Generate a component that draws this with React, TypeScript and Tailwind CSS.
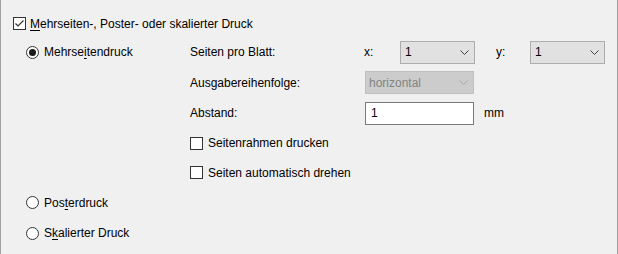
import React from "react";

const font = { fontFamily: '"Liberation Sans", Arial, sans-serif' };

function Chevron({ color }: { color: string }) {
  return (
    <svg width="9" height="5" viewBox="0 0 9 5" className="shrink-0">
      <polyline points="0.5,0.5 4.5,4.5 8.5,0.5" fill="none" stroke={color} strokeWidth="1" />
    </svg>
  );
}

function Select({ w, value, disabled }: { w: string; value: string; disabled?: boolean }) {
  return (
    <div
      className={
        disabled
          ? `${w} h-[23px] border border-[#bfbfbf] bg-[#cccccc] flex items-center justify-between pl-[3px] pr-[5px] text-[#838383]`
          : `${w} h-[23px] border border-[#adadad] bg-[#e1e1e1] flex items-center justify-between pl-[4px] pr-[5px] text-black`
      }
    >
      <span>{value}</span>
      <Chevron color={disabled ? "#a6a6a6" : "#404040"} />
    </div>
  );
}

function CheckBox({ checked }: { checked?: boolean }) {
  return (
    <div className="w-[13px] h-[13px] border border-[#333333] bg-white flex items-center justify-center shrink-0">
      {checked && (
        <svg width="11" height="11" viewBox="0 0 11 11">
          <polyline points="1.5,5.5 4,8 9.5,2.5" fill="none" stroke="#333333" strokeWidth="1.2" />
        </svg>
      )}
    </div>
  );
}

function Radio({ checked }: { checked?: boolean }) {
  return (
    <div className="w-[13px] h-[13px] rounded-full border border-[#333333] bg-white flex items-center justify-center shrink-0">
      {checked && <div className="w-[7px] h-[7px] rounded-full bg-[#1a1a1a]" />}
    </div>
  );
}

export default function App() {
  return (
    <div
      className="w-[618px] h-[254px] bg-[#f0f0f0] border-l border-r border-[#a0a0a0] text-[12px] leading-none text-black overflow-hidden"
      style={font}
    >
      <div className="pl-[12px] pt-[17px] pb-[7px] flex items-center gap-[4px] h-[37px]">
        <CheckBox checked />
        <span>
          <span className="underline underline-offset-2">M</span>ehrseiten-, Poster- oder skalierter Druck
        </span>
      </div>
      <div className="pl-[25px] flex flex-col">
        <div className="flex">
          <div className="w-[164px] h-[30px] flex items-center gap-[5px]">
            <Radio checked />
            <span>
              Mehrse<span className="underline underline-offset-2">i</span>tendruck
            </span>
          </div>
          <div className="flex flex-col">
            <div className="h-[30px] flex items-center">
              <span className="w-[174px]">Seiten pro Blatt:</span>
              <span className="w-[36px]">x:</span>
              <Select w="w-[75px]" value="1" />
              <span className="w-[34px] ml-[21px]">y:</span>
              <Select w="w-[75px]" value="1" />
            </div>
            <div className="h-[31px] flex items-center">
              <span className="w-[175px]">Ausgabereihenfolge:</span>
              <Select w="w-[109px]" value="horizontal" disabled />
            </div>
            <div className="h-[30px] flex items-center">
              <span className="w-[175px]">Abstand:</span>
              <div className="w-[109px] h-[23px] border border-[#7a7a7a] bg-white flex items-center pl-[5px]">1</div>
              <span className="ml-[10px]">mm</span>
            </div>
            <div className="h-[30px] flex items-center gap-[5px]">
              <CheckBox />
              <span>Seitenrahmen drucken</span>
            </div>
            <div className="h-[29px] flex items-center gap-[5px]">
              <CheckBox />
              <span>Seiten automatisch drehen</span>
            </div>
          </div>
        </div>
        <div className="h-[31px] flex items-center gap-[5px]">
          <Radio />
          <span>
            Pos<span className="underline underline-offset-2">t</span>erdruck
          </span>
        </div>
        <div className="h-[30px] flex items-center gap-[5px]">
          <Radio />
          <span>
            S<span className="underline underline-offset-2">k</span>alierter Druck
          </span>
        </div>
      </div>
    </div>
  );
}
